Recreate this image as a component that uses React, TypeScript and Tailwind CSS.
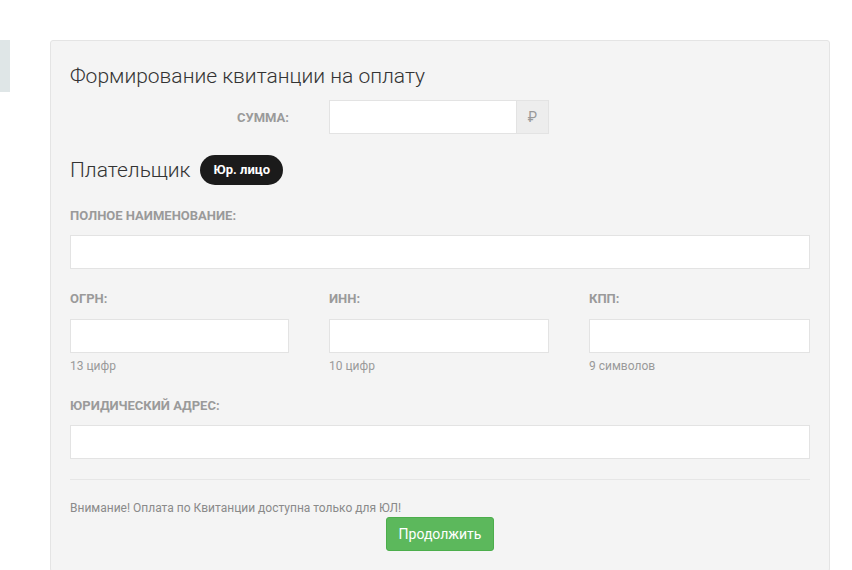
import React from 'react';

const font = { fontFamily: 'Roboto, "Noto Sans", sans-serif' };

function Label({ children }: { children: React.ReactNode }) {
  return <div className="text-[13px] font-bold uppercase leading-[15px] text-[#9a9a9a]">{children}</div>;
}

function Input() {
  return <input type="text" className="block h-[34px] w-full border border-[#e3e3e3] bg-white px-3 text-[14px] outline-none" />;
}

function Hint({ children }: { children: React.ReactNode }) {
  return <div className="mt-[6px] text-[12px] leading-[14px] text-[#9a9a9a]">{children}</div>;
}

export default function App() {
  return (
    <div className="relative min-h-[570px] w-[852px] overflow-hidden bg-white" style={font}>
      <div className="absolute left-0 top-[40px] h-[52px] w-[10px] bg-[#dfe6e7]" />
      <div className="ml-[50px] mt-[40px] w-[780px] rounded-[3px] border border-[#e4e4e4] bg-[#f4f4f4] px-[19px] pb-[20px] pt-[22px]">
        <h1 className="text-[21px] font-light leading-[26px] text-[#333]">Формирование квитанции на оплату</h1>

        <div className="mt-[11px] grid grid-cols-[219px_220px_1fr] gap-x-[40px]">
          <div className="flex h-[34px] items-center justify-end">
            <Label>Сумма:</Label>
          </div>
          <div className="flex h-[34px]">
            <input type="text" className="h-full min-w-0 flex-1 border border-[#e3e3e3] bg-white px-3 outline-none" />
            <div className="flex w-[32px] items-center justify-center border border-l-0 border-[#e3e3e3] bg-[#ededed] text-[14px] text-[#999]">₽</div>
          </div>
        </div>

        <div className="mt-[21px] flex items-center gap-[10px]">
          <h2 className="text-[21px] font-light leading-[26px] text-[#333]">Плательщик</h2>
          <span className="flex h-[30px] items-center rounded-full bg-[#1b1b1b] px-[13px] text-[13px] font-bold text-white">Юр. лицо</span>
        </div>

        <div className="mt-[23px]">
          <Label>Полное наименование:</Label>
          <div className="mt-[12px]"><Input /></div>
        </div>

        <div className="mt-[22px] grid grid-cols-[219px_220px_1fr] gap-x-[40px]">
          <div>
            <Label>ОГРН:</Label>
            <div className="mt-[13px]"><Input /></div>
            <Hint>13 цифр</Hint>
          </div>
          <div>
            <Label>ИНН:</Label>
            <div className="mt-[13px]"><Input /></div>
            <Hint>10 цифр</Hint>
          </div>
          <div>
            <Label>КПП:</Label>
            <div className="mt-[13px]"><Input /></div>
            <Hint>9 символов</Hint>
          </div>
        </div>

        <div className="mt-[25px]">
          <Label>Юридический адрес:</Label>
          <div className="mt-[12px]"><Input /></div>
        </div>

        <hr className="mt-[20px] border-0 border-t border-[#e6e6e6]" />

        <div className="mt-[21px] text-[12px] leading-[14px] text-[#8a8a8a]">Внимание! Оплата по Квитанции доступна только для ЮЛ!</div>
        <div className="mt-[2px] flex justify-center">
          <button type="button" className="h-[34px] rounded-[3px] border border-[#4cae4c] bg-[#5cb85c] px-[12px] text-[14px] text-white">Продолжить</button>
        </div>
      </div>
    </div>
  );
}
